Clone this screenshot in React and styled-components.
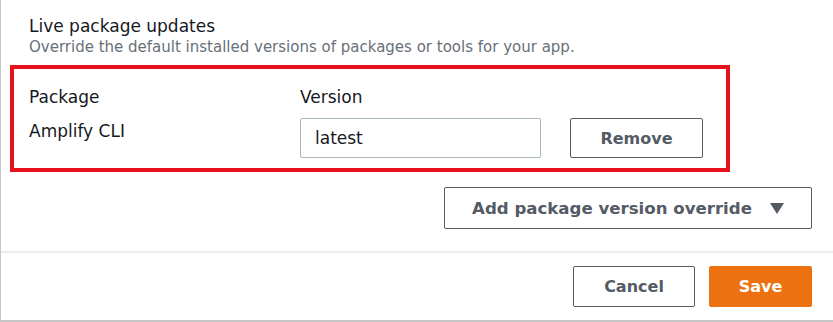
import React from 'react';
import styled, { createGlobalStyle } from 'styled-components';

const GlobalStyle = createGlobalStyle`
  body {
    margin: 0;
    background: #ffffff;
    font-family: "DejaVu Sans", "Open Sans", Arial, sans-serif;
  }
`;

const Card = styled.div`
  width: 833px;
  height: 322px;
  box-sizing: border-box;
  border-left: 1px solid #c6c6c6;
  border-bottom: 2px solid #c6c6c6;
  display: flex;
  flex-direction: column;
`;

const Body = styled.div`
  padding: 15px 21px 22px 9px;
  display: flex;
  flex-direction: column;
`;

const Header = styled.div`
  padding-left: 19px;
`;

const Title = styled.div`
  font-size: 17px;
  line-height: 22px;
  color: #16191f;
`;

const Description = styled.div`
  font-size: 15px;
  line-height: 20px;
  color: #687078;
`;

const Highlight = styled.div`
  width: 720px;
  box-sizing: border-box;
  border: 4px solid #e8111b;
  margin-top: 8px;
  padding: 17px 0 10px 15px;
  display: grid;
  grid-template-columns: 271px 241px 162px;
  align-items: start;
`;

const Cell = styled.div`
  font-size: 17px;
  line-height: 22px;
  color: #16191f;
  padding-top: ${p => p.$pt || 0}px;
`;

const Input = styled.div`
  height: 40px;
  box-sizing: border-box;
  border: 1px solid #aab7b8;
  border-radius: 2px;
  padding: 0 14px;
  display: flex;
  align-items: center;
  font-size: 17px;
  color: #16191f;
  margin-top: 10px;
`;

const Button = styled.button`
  height: ${p => p.$h || 41}px;
  width: ${p => p.$w}px;
  box-sizing: border-box;
  border: 1px solid ${p => (p.$primary ? '#ec7211' : '#545b64')};
  border-radius: 2px;
  background: ${p => (p.$primary ? '#ec7211' : '#ffffff')};
  color: ${p => (p.$primary ? '#ffffff' : '#545b64')};
  font-family: inherit;
  font-size: ${p => p.$fs || 16}px;
  font-weight: 700;
  display: flex;
  align-items: center;
  justify-content: center;
  gap: 18px;
  padding: 0;
  margin-top: ${p => p.$mt || 0}px;
  justify-self: end;
`;

const Caret = styled.span`
  width: 0;
  height: 0;
  border-left: 7px solid transparent;
  border-right: 7px solid transparent;
  border-top: 11px solid #545b64;
`;

const ActionRow = styled.div`
  display: flex;
  justify-content: flex-end;
  margin-top: 15px;
`;

const Divider = styled.div`
  height: 2px;
  background: #eaeded;
`;

const Footer = styled.div`
  display: flex;
  justify-content: flex-end;
  gap: 14px;
  padding: 13px 21px 0 0;
`;

export default function App() {
  return (
    <>
      <GlobalStyle />
      <Card>
        <Body>
          <Header>
            <Title>Live package updates</Title>
            <Description>
              Override the default installed versions of packages or tools for your app.
            </Description>
          </Header>
          <Highlight>
            <Cell>Package</Cell>
            <Cell>Version</Cell>
            <div />
            <Cell $pt={12}>Amplify CLI</Cell>
            <Input>latest</Input>
            <Button $w={133} $h={40} $mt={10}>Remove</Button>
          </Highlight>
          <ActionRow>
            <Button $w={368} $h={42} $fs={16.6}>
              Add package version override
              <Caret />
            </Button>
          </ActionRow>
        </Body>
        <Divider />
        <Footer>
          <Button $w={122}>Cancel</Button>
          <Button $w={103} $primary>Save</Button>
        </Footer>
      </Card>
    </>
  );
}
